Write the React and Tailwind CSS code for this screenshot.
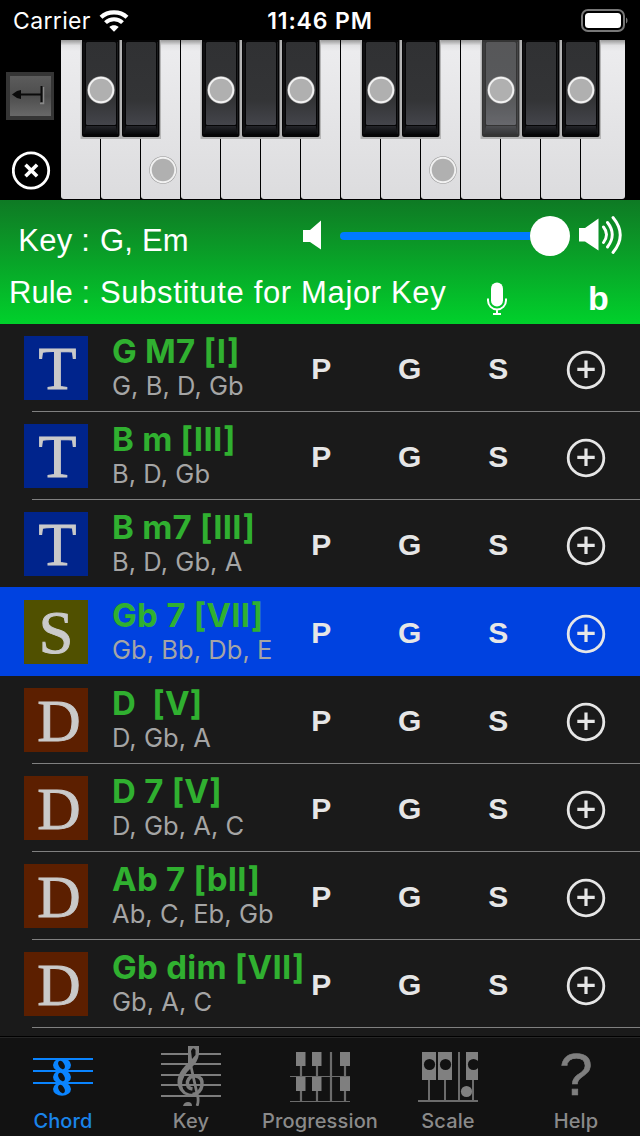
import React from "react";

const BLACK_KEYS = [82, 122, 202, 242, 282, 362, 402, 482, 522, 562];
const WHITE_KEYS = Array.from({ length: 14 }, (_, i) => i * 40 + 61);
const DOTS = [[101, 90], [221, 90], [301, 90], [381, 90], [501, 90], [581, 90], [163, 170], [443, 170]];

const ROWS = [
  { fn: "T", title: "G M7 [I]", notes: "G, B, D, Gb" },
  { fn: "T", title: "B m [III]", notes: "B, D, Gb" },
  { fn: "T", title: "B m7 [III]", notes: "B, D, Gb, A" },
  { fn: "S", title: "Gb 7 [VII]", notes: "Gb, Bb, Db, E", selected: true },
  { fn: "D", title: "D  [V]", notes: "D, Gb, A" },
  { fn: "D", title: "D 7 [V]", notes: "D, Gb, A, C" },
  { fn: "D", title: "Ab 7 [bII]", notes: "Ab, C, Eb, Gb" },
  { fn: "D", title: "Gb dim [VII]", notes: "Gb, A, C" },
];

const TILE = {
  T: "bg-[#00248c] pl-[3px] text-[62px] leading-[64px]",
  S: "bg-[#505000] text-[62px] leading-[65px]",
  D: "bg-[#5c1f00] pl-[6px] text-[60px] leading-[66px]",
};

function StatusBar() {
  return (
    <header className="grid h-10 grid-cols-3 items-center bg-black px-[13px] text-white font-['Inter',sans-serif]">
      <div className="flex items-center gap-[8px]">
        <span className="pt-px text-[23px] leading-10 tracking-[0.35px]">Carrier</span>
        <svg className="h-[22px] w-[30px]" viewBox="0 0 30 22" fill="none" stroke="#fff">
          <path d="M2 7.300C9 .8 21 .8 28 7.300" strokeWidth="4.200" />
          <path d="M6.500 12.600c4.700-4.600 12.300-4.600 17 0" strokeWidth="4" />
          <path d="M10.300 17c2.600-2.400 6.800-2.400 9.400 0L15 21.800z" fill="#fff" stroke="none" />
        </svg>
      </div>
      <span className="whitespace-nowrap pt-px text-center text-[23px] font-semibold leading-10 tracking-[0.85px]">11:46 PM</span>
      <svg className="-mr-px h-6 w-12 justify-self-end" viewBox="0 0 48 24">
        <rect x="2" y="1" width="42" height="21" rx="6" fill="none" stroke="#777" strokeWidth="2" />
        <rect x="5" y="4" width="36" height="15" rx="3.500" fill="#fff" />
        <path d="M46 8.500c2 1 2 5 0 6z" fill="#777" />
      </svg>
    </header>
  );
}

function Keyboard() {
  return (
    <svg className="block h-40 w-[580px]" viewBox="60 40 580 160">
      <defs>
        <linearGradient id="white" x1="0" y1="0" x2="0" y2="1">
          <stop offset="0" stopColor="#999" />
          <stop offset=".035" stopColor="#e2e2e4" />
          <stop offset=".07" stopColor="#ececee" />
          <stop offset="1" stopColor="#dcdcde" />
        </linearGradient>
        <linearGradient id="black" x1="0" y1="0" x2="0" y2="1">
          <stop offset="0" stopColor="#303133" />
          <stop offset=".7" stopColor="#333436" />
          <stop offset="1" stopColor="#44454b" />
        </linearGradient>
        <linearGradient id="lip" x1="0" y1="0" x2="0" y2="1">
          <stop offset="0" stopColor="#24252a" />
          <stop offset="1" stopColor="#08090b" />
        </linearGradient>
      </defs>
      <rect x="60" y="40" width="580" height="160" fill="#000" />
      {WHITE_KEYS.map((x, i) => {
        const r = i === 13 ? 625 : x + 39;
        return (
          <path
            key={x}
            d={`M${x} 40H${r}V${i === 13 ? 196 : 198.5}Q${r} 199 ${r - (i === 13 ? 3 : 0.5)} 199H${x + 3}Q${x} 199 ${x} 196Z`}
            fill="url(#white)"
          />
        );
      })}
      {BLACK_KEYS.map((x) => (
        <g key={x}>
          <rect x={x - 1.500} y="40" width="40.500" height="99" fill="#b0b0b0" opacity=".9" />
          <path d={`M${x} 40h37.500v95q0 2-2 2h-33.500q-2 0-2-2z`} fill="#050506" />
          <path d={`M${x + 2} 42v92M${x + 35.5} 42v92`} stroke="#1a1b1d" />
          <rect x={x + 4} y="42" width="30" height="83" rx="1.500" fill="url(#black)" />
          <path d={`M${x + 4} 126h30l1.500 8h-33z`} fill="url(#lip)" />
          {x === 482 && <rect x={x} y="40" width="38" height="97" fill="#fff" opacity=".19" />}
        </g>
      ))}
      {DOTS.map(([x, y]) => (
        <g key={`${x}-${y}`}>
          <circle cx={x} cy={y} r="13.700" fill="#999" />
          <circle cx={x} cy={y} r="13.200" fill="#f2f2f2" />
          <circle cx={x} cy={y} r="11.300" fill="#b0b0b0" />
        </g>
      ))}
    </svg>
  );
}

function Piano() {
  return (
    <section className="flex h-40 bg-black">
      <div className="flex w-[60px] flex-col items-center justify-end gap-[31px] pb-[10px]">
        <svg className="h-12 w-12" viewBox="0 0 48 48">
          <defs>
            <linearGradient id="metal" x1="0" y1="0" x2="0" y2="1">
              <stop offset="0" stopColor="#5c5c5c" />
              <stop offset=".5" stopColor="#4d4d4d" />
              <stop offset="1" stopColor="#686868" />
            </linearGradient>
          </defs>
          <rect width="48" height="48" fill="#353535" />
          <rect x="4" y="4" width="41" height="40" fill="url(#metal)" />
          <path d="M37.500 15v16.500H34" stroke="#888" strokeWidth="1.500" fill="none" />
          <path d="M12 22.500h23M35.500 14v16" stroke="#0a0a0a" strokeWidth="2" fill="none" />
          <path d="M6 22.500l5-3.500 4-1v9l-4-1z" fill="#0a0a0a" />
        </svg>
        <svg className="ml-[2px] h-[39px] w-[39px]" viewBox="0 0 39 39" fill="none" stroke="#fff">
          <circle cx="19" cy="19.500" r="17.700" strokeWidth="2.800" />
          <path d="M13.500 13.700l11.600 11.600M25.100 13.700L13.500 25.300" strokeWidth="3.600" />
        </svg>
      </div>
      <Keyboard />
    </section>
  );
}

function KeyPanel() {
  return (
    <section className="flex h-[124px] flex-col bg-gradient-to-b from-[#0e7a24] via-[#08a428] to-[#00d12b] text-white font-['Liberation_Sans',sans-serif]">
      <div className="flex h-[70px] items-center">
        <div className="flex w-[300px] items-center whitespace-pre pt-[12px] text-[31px] leading-9">
          <span className="w-[90px] text-right tracking-[0.2px]">Key :</span>
          <span className="pl-[10px] tracking-[0.2px]">G, Em</span>
        </div>
        <svg className="h-10 w-[28px]" viewBox="0 0 28 40" fill="#fff">
          <path d="M3 15h7l11-9.500v29L10 27H3z" />
        </svg>
        <div className="flex h-[40px] w-[242px] items-center pl-3 pt-[2px]">
          <div className="h-2 w-[190px] rounded-l-full bg-[#007aff]" />
          <div className="h-10 w-10 rounded-full bg-white" />
        </div>
        <svg className="ml-[7px] h-10 w-[48px]" viewBox="0 0 48 40" fill="none" stroke="#fff" strokeWidth="2.900" strokeLinecap="round">
          <path d="M2 13h6L21.500 3.500v32L8 26.500H2z" fill="#fff" stroke="none" />
          <path d="M26.500 12q6 7.500 0 15.500M30.500 7.500q9.500 12 0 24.500M36 2.500q14.500 17.500 0 35" />
        </svg>
      </div>
      <div className="flex h-[54px] items-center">
        <div className="flex w-[481px] items-center whitespace-pre pb-[8px] text-[31px] leading-9">
          <span className="w-[90px] text-right">Rule :</span>
          <span className="pl-[10px] tracking-[0.65px]">Substitute for Major Key</span>
        </div>
        <svg className="mt-[2px] h-9 w-8" viewBox="0 0 32 36" fill="none" stroke="#fff" strokeWidth="2">
          <rect x="10" y="2.500" width="12" height="24" rx="6" fill="#fff" stroke="none" />
          <path d="M7 18.500v2a9 9 0 0 0 18 0v-2M16 29.500v4.500M12 34h8" />
        </svg>
        <span className="ml-[75px] pt-[2px] text-[34px] font-bold leading-9">b</span>
      </div>
    </section>
  );
}

function ChordRow({ fn, title, notes, selected }) {
  return (
    <li className={`flex h-[88px] ${selected ? "relative -mt-px h-[89px] bg-[#0042e0] pt-px" : "bg-[#1a1a1a]"}`}>
      <div className={`ml-6 mt-3 flex h-16 w-16 shrink-0 justify-center font-['Liberation_Serif',serif] text-[#cacaca] [-webkit-text-stroke:1px_#cacaca] ${TILE[fn]}`}>
        {fn}
      </div>
      <div className="ml-2 flex h-[87px] grow">
        <div className="ml-[16px] flex w-[164px] shrink-0 flex-col whitespace-pre pt-[7px] font-['Inter',sans-serif]">
          <span className="text-[33px] font-bold leading-[40px] tracking-[0.25px] text-[#30b030]">{title}</span>
          <span className="-mt-px text-[25.5px] leading-[31px] tracking-[0.05px] text-[#a5a5a5]">{notes}</span>
        </div>
        <div className="ml-px grid h-[89px] w-[354px] shrink-0 grid-cols-4 items-center text-center font-['Liberation_Sans',sans-serif] text-[30px] font-bold text-[#e6e6e6]">
          <span>P</span>
          <span>G</span>
          <span>S</span>
          <svg className="-ml-px mt-[3px] h-[40px] w-[40px] justify-self-center" viewBox="0 0 40 40" fill="none" stroke="currentColor">
            <circle cx="20" cy="20" r="17.800" strokeWidth="2.800" />
            <path d="M11.300 19.300h17.400M20 10.600V28" strokeWidth="3.200" />
          </svg>
        </div>
      </div>
    </li>
  );
}

function ChordIcon() {
  return (
    <svg className="h-[60px] w-[60px]" viewBox="0 0 60 60" fill="none" stroke="#0a84ff">
      <path d="M0 13h60M0 25h60M0 37h60" strokeWidth="2" />
      {[19, 31, 43].map((y) => (
        <ellipse key={y} cx="29" cy={y} rx="9" ry="6.800" fill="#0a84ff" stroke="none" />
      ))}
      {[19, 31, 43].map((y) => (
        <ellipse key={y} cx="28.500" cy={y} rx="2.800" ry="4.500" fill="#121212" stroke="none" transform={`rotate(-28 28.500 ${y})`} />
      ))}
    </svg>
  );
}

function KeyIcon() {
  return (
    <svg className="h-[60px] w-[60px]" viewBox="0 0 60 60" fill="none" stroke="#7d7d7d">
      <path d="M0 8h60M0 18h60M0 29h60M0 39h60M0 50h60" strokeWidth="2" />
      <path d="M27 0h11v8q-1 8-8 14Q21 30 21 39q1 9 12 9l1 2Q20 51 17 40q-3-11 10-23z" fill="#7d7d7d" stroke="none" />
      <path d="M30 5q2-5 4.500-1v5l-3.500 4z" fill="#121212" stroke="none" />
      <path d="M29 16l8 36q.500 5-1 8" strokeWidth="2.800" />
      <path d="M31.500 43q-6-1-5-7.500 2-6 8-5.500 7.500 1 6.500 9.500-1.500 8-9.500 9" strokeWidth="3.500" />
      <path d="M22 60q1-4 5-4t4 4z" fill="#7d7d7d" stroke="none" />
    </svg>
  );
}

function ProgressionIcon() {
  return (
    <svg className="h-[60px] w-[60px]" viewBox="0 0 60 60" fill="#7f7f7f" stroke="#6c6c6c">
      <path d="M0 30.500h60M0 55.500h60" strokeWidth="1.200" />
      <path d="M11 6v49M27 6v49M41 6v49M55 6v49" strokeWidth="2.200" />
      <path d="M6 6h9.500v14H6zM22 6h9.500v14H22zM50 6h10v14H50zM6 31h9.500v14H6zM22 31h9.500v14H22zM50 31h10v14H50z" stroke="none" />
    </svg>
  );
}

function ScaleIcon() {
  return (
    <svg className="h-[60px] w-[60px]" viewBox="0 0 60 60" fill="#808080" stroke="#6c6c6c" strokeWidth="2">
      <path d="M0 55h60M11 30v25M27 30v25M41 6v49M55 30v25" />
      <path d="M4 6h14v28H4zM20 6h14v28H20zM48 6h12v28H48z" stroke="none" />
      <g stroke="none">
        <circle cx="11.500" cy="18.500" r="5.600" fill="#121212" />
        <circle cx="27.500" cy="18.500" r="5.600" fill="#121212" />
        <circle cx="55.500" cy="18.500" r="5.600" fill="#121212" />
        <circle cx="48.500" cy="45.500" r="5.600" />
      </g>
    </svg>
  );
}

function HelpIcon() {
  return (
    <span className="h-[60px] text-center font-['Liberation_Sans',sans-serif] text-[60px] leading-[58px] text-[#7f7f7f] [-webkit-text-stroke:0.6px_#7f7f7f]">?</span>
  );
}

const TABS = [
  ["Chord", ChordIcon, "pr-[2px]"],
  ["Key", KeyIcon, "pr-[2px]"],
  ["Progression", ProgressionIcon, ""],
  ["Scale", ScaleIcon, ""],
  ["Help", HelpIcon, ""],
];

function TabBar() {
  return (
    <nav className="grid h-[100px] grid-cols-5 border-t border-black bg-[#121212]">
      {TABS.map(([label, Icon, inset], i) => (
        <div key={label} className={`flex flex-col items-center border-t border-[#262626] pt-[8px] ${inset}`}>
          <Icon />
          <span className={`mt-[2px] whitespace-nowrap font-['Inter',sans-serif] text-[20px] font-medium leading-[26px] tracking-[0.15px] ${i === 0 ? "text-[#1a84ea]" : "text-[#8a8a8a]"}`}>
            {label}
          </span>
        </div>
      ))}
    </nav>
  );
}

export default function App() {
  return (
    <main className="flex h-[1136px] w-[640px] flex-col overflow-hidden bg-[#1a1a1a]">
      <StatusBar />
      <Piano />
      <KeyPanel />
      <ul className="h-[712px]">
        {ROWS.map((row) => (
          <React.Fragment key={row.title}>
            <ChordRow {...row} />
            {!row.selected && <li className="relative -mt-px ml-8 h-px bg-[#808080]" />}
          </React.Fragment>
        ))}
      </ul>
      <TabBar />
    </main>
  );
}
